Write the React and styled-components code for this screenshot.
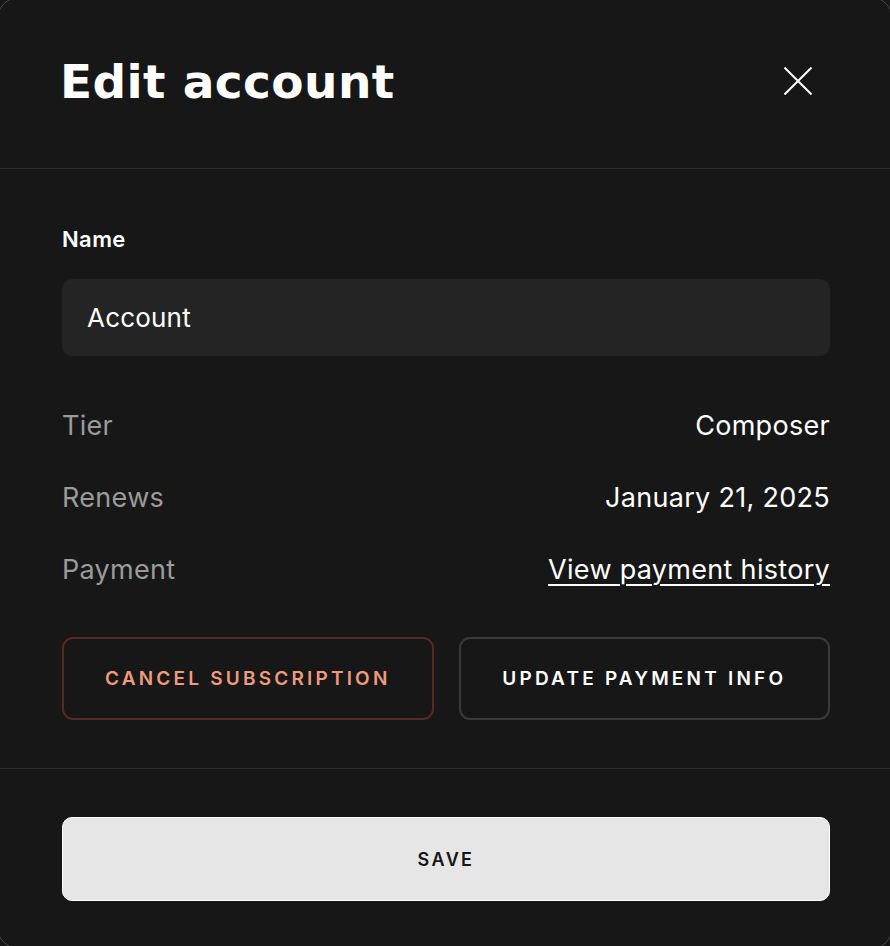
import styled, { createGlobalStyle } from 'styled-components';

const GlobalStyle = createGlobalStyle`
  html, body {
    margin: 0;
    background: #171717;
    overflow: hidden;
  }
  body {
    font-family: Inter, "Liberation Sans", sans-serif;
    color: #fff;
  }
`;

const Card = styled.div`
  box-sizing: border-box;
  margin: -3px;
  width: calc(100% + 6px);
  height: 952px;
  background: #171717;
  border: 1px solid #4a4a4a;
  border-radius: 22px;
  display: flex;
  flex-direction: column;
`;

const Header = styled.div`
  height: 171px;
  box-sizing: border-box;
  padding: 0 80px 4px 62px;
  display: flex;
  align-items: center;
  justify-content: space-between;
  border-bottom: 1px solid #2e2e2e;
`;

const Title = styled.h1`
  margin: 0;
  font-family: "DejaVu Sans", Inter, sans-serif;
  font-size: 47px;
  font-weight: 700;
  letter-spacing: 0.4px;
`;

const CloseButton = styled.button`
  background: none;
  border: none;
  padding: 0;
  width: 28px;
  height: 28px;
  display: flex;
  cursor: pointer;
`;

const Body = styled.div`
  padding: 57px 62px 48px 64px;
  border-bottom: 1px solid #2e2e2e;
  display: flex;
  flex-direction: column;
`;

const Label = styled.label`
  font-size: 22px;
  font-weight: 600;
  letter-spacing: 0.4px;
  line-height: 26px;
`;

const Input = styled.input`
  margin-top: 27px;
  height: 77px;
  box-sizing: border-box;
  background: #242424;
  border: none;
  border-radius: 10px;
  padding: 0 25px;
  font-family: inherit;
  font-size: 26px;
  letter-spacing: 0.2px;
  color: #fff;
  outline: none;
`;

const InfoList = styled.div`
  margin-top: 33px;
  display: flex;
  flex-direction: column;
`;

const InfoRow = styled.div`
  height: 72px;
  display: flex;
  align-items: center;
  justify-content: space-between;
  font-size: 27px;
  letter-spacing: 0.3px;
`;

const InfoLabel = styled.span`
  color: #9b9b9b;
`;

const InfoValue = styled.span`
  color: #fff;
`;

const InfoLink = styled.a`
  color: #fff;
  text-decoration: underline;
  text-underline-offset: 5px;
  text-decoration-thickness: 2px;
  cursor: pointer;
`;

const Actions = styled.div`
  margin-top: 32px;
  display: grid;
  grid-template-columns: 1fr 1fr;
  gap: 25px;
`;

const OutlineButton = styled.button`
  height: 83px;
  background: transparent;
  border: 2px solid ${(p) => (p.$danger ? '#5a2820' : '#3a3a3a')};
  border-radius: 11px;
  color: ${(p) => (p.$danger ? '#ee9a7e' : '#fff')};
  font-family: inherit;
  font-size: 19px;
  font-weight: 600;
  letter-spacing: 3.2px;
  cursor: pointer;
`;

const Footer = styled.div`
  padding: 48px 62px 0 64px;
`;

const SaveButton = styled.button`
  width: 100%;
  height: 84px;
  background: #e6e6e6;
  border: 1.5px solid #fff;
  border-radius: 10px;
  color: #151515;
  font-family: inherit;
  font-size: 18px;
  font-weight: 600;
  letter-spacing: 2.4px;
  cursor: pointer;
`;

export default function App() {
  return (
    <>
      <GlobalStyle />
      <Card>
        <Header>
          <Title>Edit account</Title>
          <CloseButton aria-label="Close">
            <svg width="28" height="28" viewBox="0 0 28 28">
              <path d="M0.5 0.5 L27.5 27.5 M27.5 0.5 L0.5 27.5" stroke="#fff" strokeWidth="2" />
            </svg>
          </CloseButton>
        </Header>
        <Body>
          <Label>Name</Label>
          <Input defaultValue="Account" />
          <InfoList>
            <InfoRow>
              <InfoLabel>Tier</InfoLabel>
              <InfoValue>Composer</InfoValue>
            </InfoRow>
            <InfoRow>
              <InfoLabel>Renews</InfoLabel>
              <InfoValue>January 21, 2025</InfoValue>
            </InfoRow>
            <InfoRow>
              <InfoLabel>Payment</InfoLabel>
              <InfoLink>View payment history</InfoLink>
            </InfoRow>
          </InfoList>
          <Actions>
            <OutlineButton $danger>CANCEL SUBSCRIPTION</OutlineButton>
            <OutlineButton>UPDATE PAYMENT INFO</OutlineButton>
          </Actions>
        </Body>
        <Footer>
          <SaveButton>SAVE</SaveButton>
        </Footer>
      </Card>
    </>
  );
}
